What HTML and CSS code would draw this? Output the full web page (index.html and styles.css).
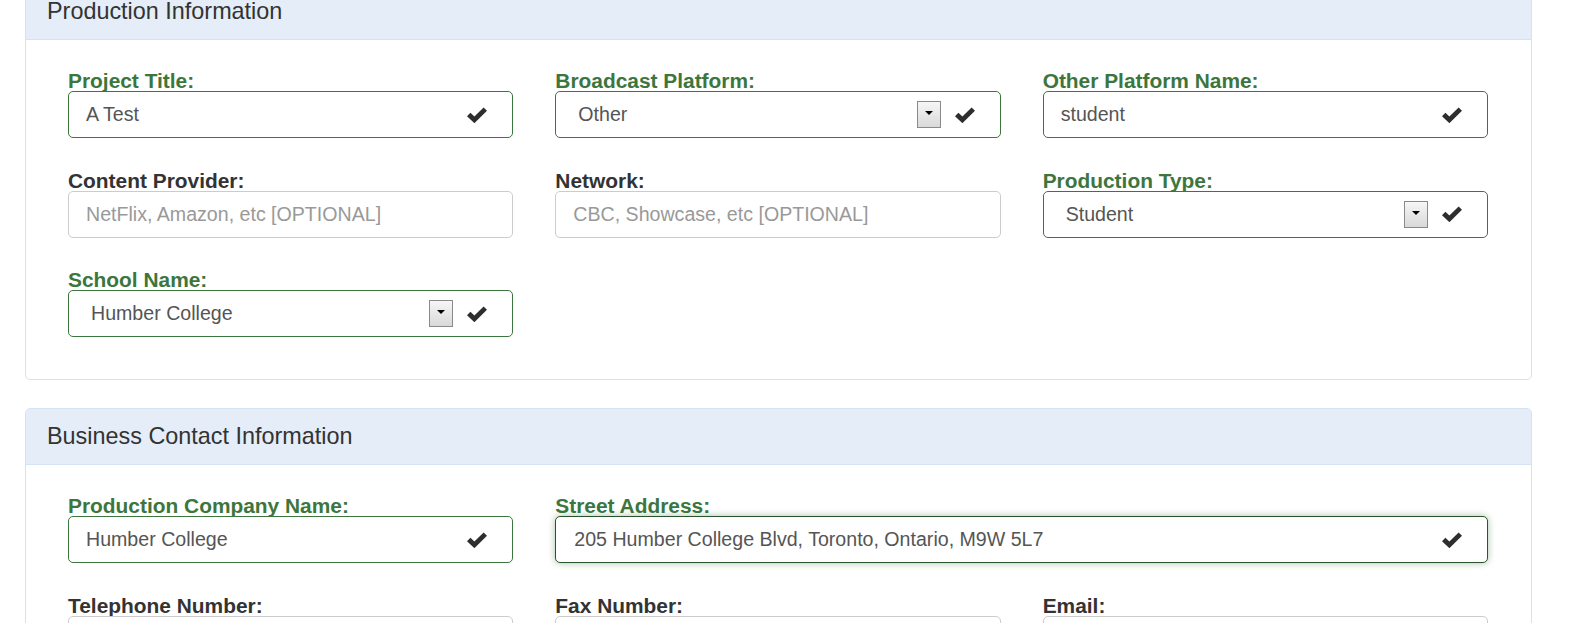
FILE: index.html
```html
<!DOCTYPE html>
<html lang="en">
<head>
<meta charset="utf-8">
<title>Production Form</title>
<link rel="stylesheet" href="styles.css">
</head>
<body>
<div class="page">
  <section class="panel">
    <div class="panel-heading">Production Information</div>
    <div class="panel-body">
      <div class="form-grid">
        <div class="group ok">
          <label class="lbl">Project Title:</label>
          <div class="control"><span class="val">A Test</span><svg class="check" viewBox="0 0 20 16"><polygon points="0,9.2 3.4,5.8 7.4,9.6 16.6,0.4 20,3.8 7.4,16.2"/></svg></div>
        </div>
        <div class="group ok">
          <label class="lbl">Broadcast Platform:</label>
          <div class="control select"><span class="val">Other</span><span class="arrow"></span><svg class="check" viewBox="0 0 20 16"><polygon points="0,9.2 3.4,5.8 7.4,9.6 16.6,0.4 20,3.8 7.4,16.2"/></svg></div>
        </div>
        <div class="group ok">
          <label class="lbl">Other Platform Name:</label>
          <div class="control"><span class="val">student</span><svg class="check" viewBox="0 0 20 16"><polygon points="0,9.2 3.4,5.8 7.4,9.6 16.6,0.4 20,3.8 7.4,16.2"/></svg></div>
        </div>

        <div class="group">
          <label class="lbl">Content Provider:</label>
          <div class="control"><span class="val placeholder">NetFlix, Amazon, etc [OPTIONAL]</span></div>
        </div>
        <div class="group">
          <label class="lbl">Network:</label>
          <div class="control"><span class="val placeholder">CBC, Showcase, etc [OPTIONAL]</span></div>
        </div>
        <div class="group ok">
          <label class="lbl">Production Type:</label>
          <div class="control select"><span class="val">Student</span><span class="arrow"></span><svg class="check" viewBox="0 0 20 16"><polygon points="0,9.2 3.4,5.8 7.4,9.6 16.6,0.4 20,3.8 7.4,16.2"/></svg></div>
        </div>

        <div class="group ok">
          <label class="lbl">School Name:</label>
          <div class="control select"><span class="val">Humber College</span><span class="arrow"></span><svg class="check" viewBox="0 0 20 16"><polygon points="0,9.2 3.4,5.8 7.4,9.6 16.6,0.4 20,3.8 7.4,16.2"/></svg></div>
        </div>
      </div>
    </div>
  </section>

  <section class="panel">
    <div class="panel-heading">Business Contact Information</div>
    <div class="panel-body">
      <div class="form-grid">
        <div class="group ok">
          <label class="lbl">Production Company Name:</label>
          <div class="control"><span class="val">Humber College</span><svg class="check" viewBox="0 0 20 16"><polygon points="0,9.2 3.4,5.8 7.4,9.6 16.6,0.4 20,3.8 7.4,16.2"/></svg></div>
        </div>
        <div class="group ok span2">
          <label class="lbl">Street Address:</label>
          <div class="control focus"><span class="val">205 Humber College Blvd, Toronto, Ontario, M9W 5L7</span><svg class="check" viewBox="0 0 20 16"><polygon points="0,9.2 3.4,5.8 7.4,9.6 16.6,0.4 20,3.8 7.4,16.2"/></svg></div>
        </div>

        <div class="group">
          <label class="lbl">Telephone Number:</label>
          <div class="control"><span class="val"></span></div>
        </div>
        <div class="group">
          <label class="lbl">Fax Number:</label>
          <div class="control"><span class="val"></span></div>
        </div>
        <div class="group">
          <label class="lbl">Email:</label>
          <div class="control"><span class="val"></span></div>
        </div>
      </div>
    </div>
  </section>
</div>
</body>
</html>
```
FILE: styles.css
```css
html, body {
  margin: 0;
  padding: 0;
  background: #ffffff;
  overflow: hidden;
}

body {
  font-family: "Liberation Sans", Arial, Helvetica, sans-serif;
  color: #333333;
}

.page {
  margin: -17px 0 0 25px;
  width: 1507px;
}

.panel {
  border: 1px solid #d3e3f4;
  border-radius: 5px;
  background: #ffffff;
  margin-bottom: 28px;
  overflow: hidden;
}

.panel-heading {
  background: #e4edf8;
  border-bottom: 1px solid #d3e3f4;
  padding: 14px 21px;
  font-size: 23.4px;
  line-height: 27px;
  color: #333333;
}

.panel-body {
  padding: 28px 43px 42px 42px;
}

.form-grid {
  display: grid;
  grid-template-columns: repeat(3, 1fr);
  column-gap: 42px;
  row-gap: 29.5px;
}

.span2 {
  grid-column: span 2;
}

.group {
  display: flex;
  flex-direction: column;
}

.lbl {
  display: block;
  font-size: 20.9px;
  font-weight: bold;
  line-height: 23px;
  padding-top: 1px;
  margin-bottom: -1px;
  color: #333333;
  white-space: nowrap;
}

.ok .lbl {
  color: #3c763d;
}

.control {
  box-sizing: border-box;
  height: 47px;
  display: flex;
  align-items: center;
  border: 1px solid #cccccc;
  border-radius: 5px;
  padding: 0 25px 0 17px;
  font-size: 19.6px;
  color: #555555;
  background: #ffffff;
}

.ok .control {
  border-color: #3c763d;
}

.control.select {
  padding-left: 22px;
}

.control.focus {
  border-color: #2b542c;
  box-shadow: 0 0 7px rgba(60, 118, 61, 0.45);
  padding-left: 18px;
}

.val {
  flex: 1;
  white-space: nowrap;
  overflow: hidden;
}

.placeholder {
  color: #999999;
}

.arrow {
  box-sizing: border-box;
  width: 24px;
  height: 27px;
  border: 1px solid #8a8a8a;
  background: linear-gradient(#f6f6f6, #d9d9d9);
  margin-right: 14px;
  display: flex;
  justify-content: center;
  padding-top: 9px;
}

.arrow::after {
  content: "";
  width: 0;
  height: 0;
  border-left: 4px solid transparent;
  border-right: 4px solid transparent;
  border-top: 4px solid #000000;
}

.check {
  width: 20px;
  height: 16px;
  fill: #2e2e2e;
  flex: none;
}
```
